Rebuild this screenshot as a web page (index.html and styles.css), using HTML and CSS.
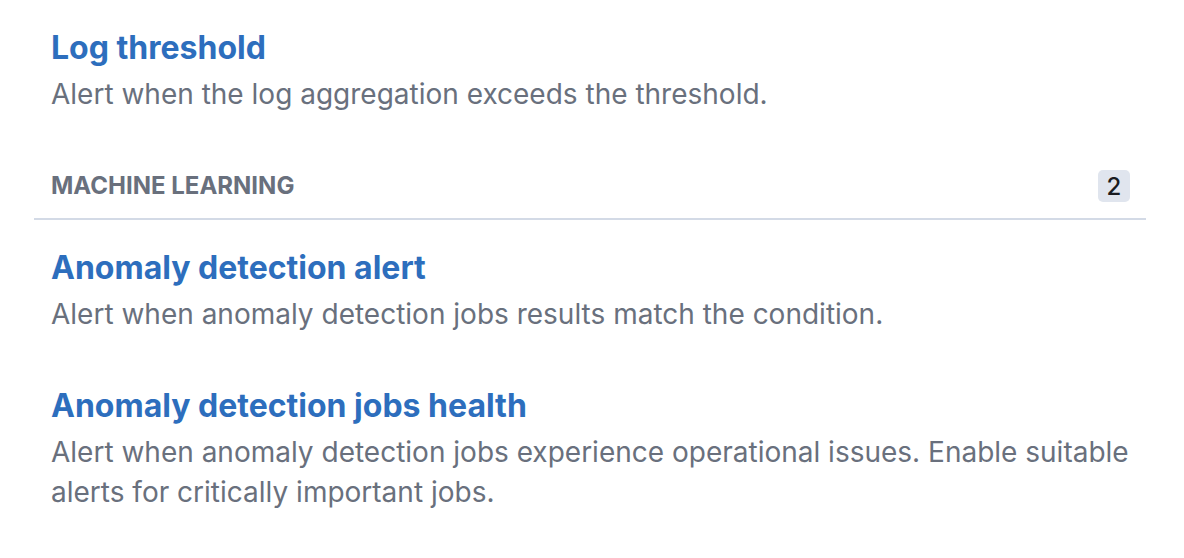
FILE: index.html
```html
<!DOCTYPE html>
<html lang="en">
<head>
<meta charset="utf-8">
<title>Rule types</title>
<link rel="stylesheet" href="styles.css">
</head>
<body>
<div class="list">
  <div class="item">
    <div class="item-title">Log threshold</div>
    <div class="item-desc">Alert when the log aggregation exceeds the threshold.</div>
  </div>
  <div class="group-header">
    <span class="group-name">Machine Learning</span>
    <span class="badge">2</span>
  </div>
  <div class="item">
    <div class="item-title">Anomaly detection alert</div>
    <div class="item-desc">Alert when anomaly detection jobs results match the condition.</div>
  </div>
  <div class="item">
    <div class="item-title">Anomaly detection jobs health</div>
    <div class="item-desc">Alert when anomaly detection jobs experience operational issues. Enable suitable alerts for critically important jobs.</div>
  </div>
</div>
</body>
</html>
```

FILE: styles.css
```css
html, body {
  margin: 0;
  padding: 0;
  background: #ffffff;
}
body {
  font-family: Inter, "Noto Sans", "Liberation Sans", sans-serif;
  width: 1184px;
  height: 558px;
  overflow: hidden;
}
.list {
  margin: 0 38px 0 34px;
  display: flex;
  flex-direction: column;
}
.item {
  padding: 24px 17px;
}
.item-title {
  font-size: 32px;
  line-height: 48px;
  font-weight: 700;
  color: #2d6ebd;
  margin-bottom: 2px;
}
.item-desc {
  font-size: 28px;
  line-height: 40px;
  color: #69707d;
}
.group-header {
  display: flex;
  align-items: center;
  justify-content: space-between;
  padding: 32px 16px 16px 17px;
  border-bottom: 2px solid #d3dae6;
}
.group-name {
  font-size: 24px;
  line-height: 32px;
  font-weight: 700;
  text-transform: uppercase;
  color: #69707d;
}
.badge {
  width: 32px;
  height: 32px;
  border-radius: 5px;
  background: #e0e5ee;
  color: #1a1c21;
  font-size: 24px;
  font-weight: 500;
  display: flex;
  align-items: center;
  justify-content: center;
}
```
